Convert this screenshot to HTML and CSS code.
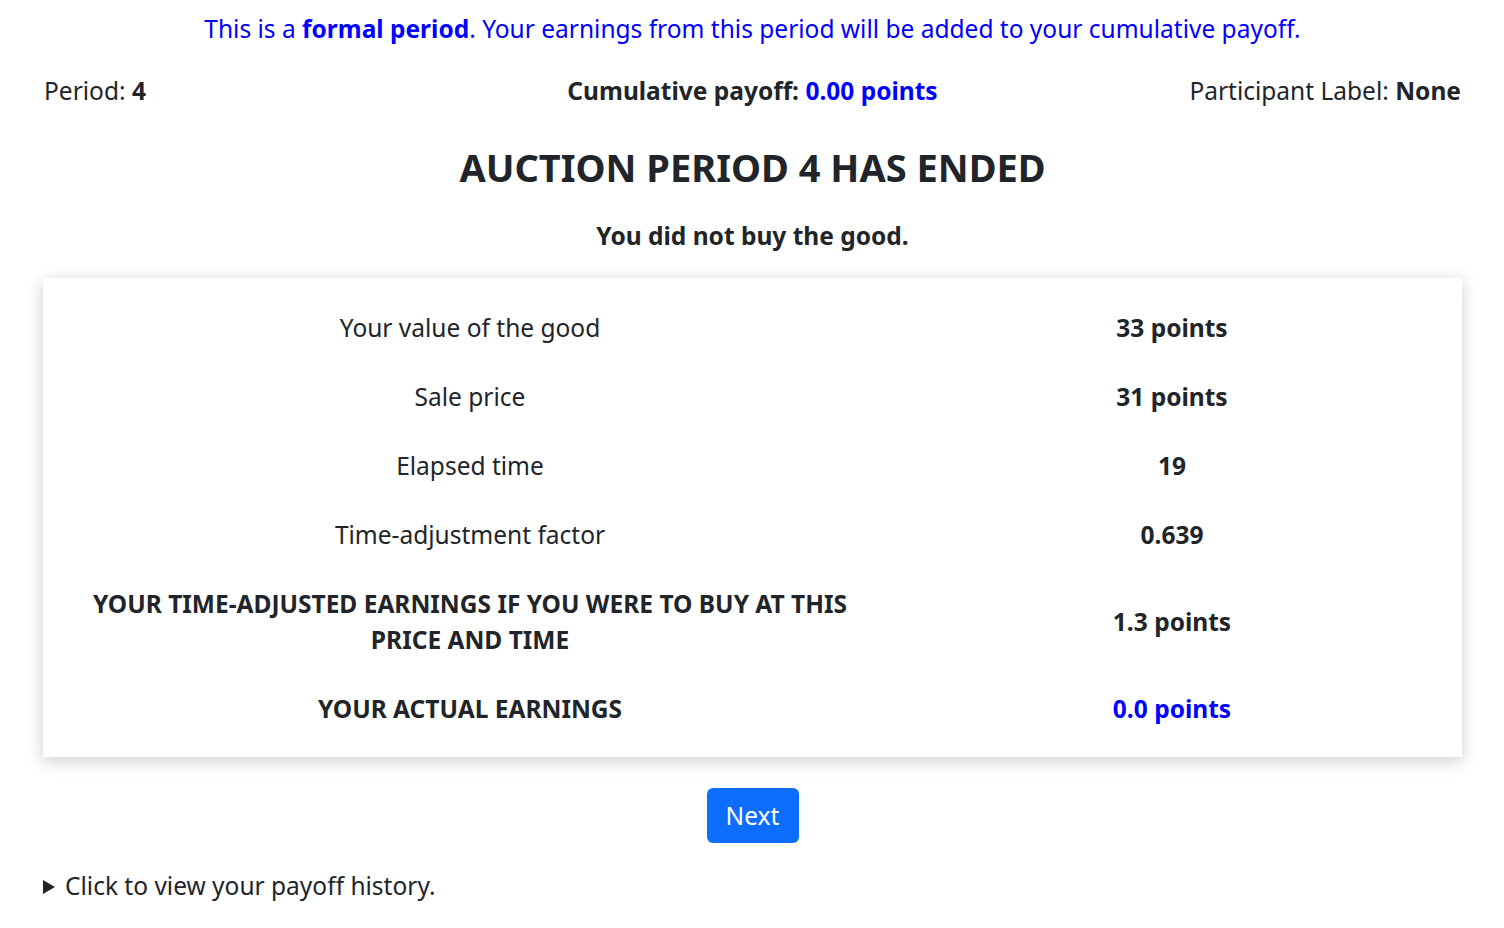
FILE: index.html
```html
<!DOCTYPE html>
<html lang="en">
<head>
<meta charset="utf-8">
<title>Auction Period 4 Has Ended</title>
<link rel="stylesheet" href="styles.css">
</head>
<body>
<div class="container">
  <p class="notice">This is a <b>formal period</b>. Your earnings from this period will be added to your cumulative payoff.</p>
  <div class="info-row">
    <div class="info-left">Period: <b>4</b></div>
    <div class="info-center"><b>Cumulative payoff: <span class="blue">0.00 points</span></b></div>
    <div class="info-right">Participant Label: <b>None</b></div>
  </div>
  <h2 class="title">AUCTION PERIOD 4 HAS ENDED</h2>
  <p class="subtitle">You did not buy the good.</p>
  <div class="card">
    <div class="row"><div class="label">Your value of the good</div><div class="value">33 points</div></div>
    <div class="row"><div class="label">Sale price</div><div class="value">31 points</div></div>
    <div class="row"><div class="label">Elapsed time</div><div class="value">19</div></div>
    <div class="row"><div class="label">Time-adjustment factor</div><div class="value">0.639</div></div>
    <div class="row"><div class="label strong">YOUR TIME-ADJUSTED EARNINGS IF YOU WERE TO BUY AT THIS PRICE AND TIME</div><div class="value">1.3 points</div></div>
    <div class="row"><div class="label strong">YOUR ACTUAL EARNINGS</div><div class="value blue">0.0 points</div></div>
  </div>
  <div class="actions"><button class="btn">Next</button></div>
  <details class="history"><summary>Click to view your payoff history.</summary></details>
</div>
</body>
</html>
```
FILE: styles.css
```css
* { box-sizing: border-box; }
body {
  margin: 0;
  background: #fff;
  color: #212529;
  font-family: "Noto Sans", "Open Sans", sans-serif;
  font-size: 24.5px;
  line-height: 36px;
}
.container {
  padding: 11px 43px 0 44px;
}
.notice {
  margin: 0;
  text-align: center;
  color: #0000ff;
}
.blue { color: #0000ff; }
.info-row {
  margin-top: 26px;
  display: grid;
  grid-template-columns: 1fr auto 1fr;
}
.info-right { text-align: right; }
.title {
  margin: 35px 0 0;
  text-align: center;
  font-size: 38px;
  line-height: 46px;
  font-weight: 700;
}
.subtitle {
  margin: 28px 0 0;
  text-align: center;
  font-weight: 700;
}
.card {
  margin: 24px -1px 0 -1px;
  padding: 15px 15px 14px 0;
  background: #fff;
  box-shadow: 0 4px 16px rgba(0, 0, 0, 0.2);
}
.row {
  display: grid;
  grid-template-columns: 854px 1fr;
  align-items: center;
}
.label, .value {
  text-align: center;
  padding: 17px 20px 16px;
}
.label { padding-left: 32px; padding-right: 32px; }
.value { font-weight: 700; }
.strong { font-weight: 700; }
.actions {
  margin-top: 31px;
  display: flex;
  justify-content: center;
}
.btn {
  font: inherit;
  color: #fff;
  background: #0d6efd;
  border: 0;
  border-radius: 6px;
  width: 92px;
  height: 55px;
  padding: 0;
}
.history {
  margin-top: 25px;
}
.history summary {
  cursor: pointer;
  list-style: none;
  display: flex;
  align-items: center;
}
.history summary::-webkit-details-marker { display: none; }
.history summary::before {
  content: "";
  flex: 0 0 auto;
  width: 0;
  height: 0;
  border-top: 7px solid transparent;
  border-bottom: 7px solid transparent;
  border-left: 12px solid #212529;
  margin: 1px 10px 0 -1px;
}
```
